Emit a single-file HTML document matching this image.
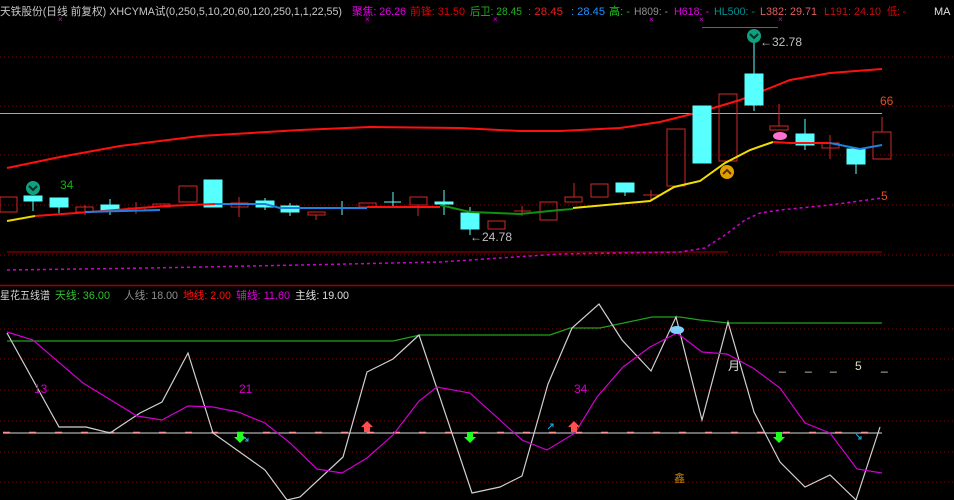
<!DOCTYPE html>
<html><head><meta charset="utf-8"><style>
html,body{margin:0;padding:0;background:#000;width:954px;height:500px;overflow:hidden}
svg{display:block}
text{font-family:"Liberation Sans","Noto Sans CJK SC",sans-serif;font-size:11px}
</style></head><body>
<svg width="954" height="500" viewBox="0 0 954 500">
<rect width="954" height="500" fill="#000"/>
<!-- header -->
<text x="0" y="15" fill="#c8c8c8" textLength="342" lengthAdjust="spacingAndGlyphs">天铁股份(日线 前复权) XHCYMA试(0,250,5,10,20,60,120,250,1,1,22,55)</text>
<text x="352" y="15" fill="#e000e0" textLength="54" lengthAdjust="spacingAndGlyphs">聚焦: 26.26</text>
<text x="410" y="15" fill="#e00000" textLength="55" lengthAdjust="spacingAndGlyphs">前锋: 31.50</text>
<text x="470" y="15" fill="#20b020" textLength="52" lengthAdjust="spacingAndGlyphs">后卫: 28.45</text>
<text x="528" y="15" fill="#e02020" textLength="35" lengthAdjust="spacingAndGlyphs">: 28.45</text>
<text x="571" y="15" fill="#2090ff" textLength="34" lengthAdjust="spacingAndGlyphs">: 28.45</text>
<text x="609" y="15" fill="#20c020" textLength="21" lengthAdjust="spacingAndGlyphs">高: -</text>
<text x="634" y="15" fill="#909090" textLength="34" lengthAdjust="spacingAndGlyphs">H809: -</text>
<text x="674" y="15" fill="#e000e0" textLength="35" lengthAdjust="spacingAndGlyphs">H618: -</text>
<text x="714" y="15" fill="#009090" textLength="41" lengthAdjust="spacingAndGlyphs">HL500: -</text>
<text x="760" y="15" fill="#e06060" textLength="57" lengthAdjust="spacingAndGlyphs">L382: 29.71</text>
<text x="824" y="15" fill="#c01010" textLength="57" lengthAdjust="spacingAndGlyphs">L191: 24.10</text>
<text x="887" y="15" fill="#e00000" textLength="19" lengthAdjust="spacingAndGlyphs">低: -</text>
<text x="934" y="15" fill="#e0e0e0">MA</text>
<g fill="#e000e0"><text x="58" y="22" style="font-size:8px">×</text><text x="365" y="22" style="font-size:8px">×</text><text x="493" y="22" style="font-size:8px">×</text><text x="649" y="22" style="font-size:8px">×</text><text x="699" y="22" style="font-size:8px">×</text><text x="778" y="22" style="font-size:8px">×</text></g>
<!-- upper grid -->
<g stroke="#8a0000" stroke-dasharray="1,3" stroke-width="1">
<line x1="0" y1="57" x2="954" y2="57"/><line x1="0" y1="106" x2="954" y2="106"/><line x1="0" y1="155" x2="954" y2="155"/><line x1="0" y1="205" x2="954" y2="205"/><line x1="0" y1="255" x2="954" y2="255"/>
</g>
<line x1="7" y1="252" x2="728" y2="252" stroke="#a00000"/>
<line x1="779" y1="252" x2="882" y2="252" stroke="#a00000"/>
<line x1="0" y1="113.5" x2="882" y2="113.5" stroke="#e09090"/>
<line x1="702" y1="27.5" x2="778" y2="27.5" stroke="#009090"/>
<line x1="0" y1="285.5" x2="954" y2="285.5" stroke="#a00000" stroke-width="1.5"/>
<polyline fill="none" stroke="#d000d0" stroke-width="1.5" stroke-dasharray="3,3" points="7,270 150,268 300,265 440,262 560,254 680,252 705,248 725,235 745,220 760,213 780,210 830,205 882,198"/>
<polyline fill="none" stroke="#ff1010" stroke-width="2" points="7,168 60,157 120,146 200,136 300,130 370,127 460,128 520,131 560,131 620,128 660,122 700,112 740,100 790,80 830,73 882,69"/>
<g stroke="#d02828" fill="none" stroke-width="1">
<rect x="0" y="197" width="17" height="15"/>
<line x1="85" y1="205" x2="85" y2="215"/><rect x="76" y="207" width="17" height="5"/>
<rect x="128" y="208" width="17" height="3"/><line x1="136" y1="202" x2="136" y2="214"/>
<rect x="153" y="204" width="17" height="3"/>
<rect x="179" y="186" width="18" height="16"/>
<rect x="231" y="203" width="17" height="4"/><line x1="239" y1="197" x2="239" y2="217"/>
<rect x="308" y="212" width="17" height="3"/><line x1="316" y1="215" x2="316" y2="220"/>
<rect x="359" y="203" width="17" height="4"/>
<rect x="410" y="197" width="17" height="8"/><line x1="418" y1="205" x2="418" y2="216"/>
<rect x="488" y="221" width="17" height="8"/>
<line x1="514" y1="211" x2="531" y2="211"/><line x1="522" y1="206" x2="522" y2="216"/>
<rect x="540" y="202" width="17" height="18"/>
<rect x="565" y="197" width="17" height="5"/><line x1="574" y1="183" x2="574" y2="197"/>
<rect x="591" y="184" width="17" height="13"/>
<line x1="643" y1="195" x2="660" y2="195"/><line x1="651" y1="190" x2="651" y2="200"/>
<rect x="667" y="129" width="18" height="57"/>
<rect x="719" y="94" width="18" height="67"/>
<rect x="770" y="126" width="18" height="4"/><line x1="779" y1="104" x2="779" y2="126"/>
<rect x="822" y="143" width="17" height="5"/><line x1="830" y1="135" x2="830" y2="159"/>
<rect x="873" y="132" width="18" height="27"/><line x1="882" y1="117" x2="882" y2="132"/>
</g>
<g fill="#58ffff" stroke="#58ffff">
<rect x="24" y="196" width="18" height="5"/><line x1="33" y1="201" x2="33" y2="211"/>
<rect x="50" y="198" width="18" height="9"/><line x1="59" y1="207" x2="59" y2="213"/>
<rect x="101" y="205" width="18" height="5"/><line x1="110" y1="199" x2="110" y2="215"/>
<rect x="204" y="180" width="18" height="27"/>
<rect x="256" y="201" width="18" height="6"/><line x1="265" y1="198" x2="265" y2="210"/>
<rect x="281" y="206" width="18" height="6"/><line x1="290" y1="203" x2="290" y2="216"/>
<line x1="333" y1="208" x2="350" y2="208"/><line x1="342" y1="201" x2="342" y2="215"/>
<line x1="384" y1="202" x2="401" y2="202"/><line x1="393" y1="192" x2="393" y2="208"/>
<rect x="435" y="202" width="18" height="2"/><line x1="444" y1="190" x2="444" y2="215"/>
<rect x="461" y="213" width="18" height="16"/><line x1="470" y1="207" x2="470" y2="235"/>
<rect x="616" y="183" width="18" height="9"/><line x1="625" y1="192" x2="625" y2="196"/>
<rect x="693" y="106" width="18" height="57"/>
<rect x="745" y="74" width="18" height="31"/><line x1="754" y1="40" x2="754" y2="111"/>
<rect x="796" y="134" width="18" height="11"/><line x1="805" y1="119" x2="805" y2="150"/>
<rect x="847" y="149" width="18" height="15"/><line x1="856" y1="164" x2="856" y2="174"/>
</g>
<polyline fill="none" stroke="#e8d800" stroke-width="2" points="7,221 35,216"/>
<polyline fill="none" stroke="#ff1010" stroke-width="2" points="35,216 90,212 165,206 215,204"/>
<polyline fill="none" stroke="#2080e0" stroke-width="2" points="85,212 160,210"/>
<polyline fill="none" stroke="#2080e0" stroke-width="2" points="215,204 265,204 280,208 367,208"/>
<polyline fill="none" stroke="#ff1010" stroke-width="2" points="367,207 440,207"/>
<polyline fill="none" stroke="#109010" stroke-width="2" points="440,205 470,212 520,214 560,210 573,209"/>
<polyline fill="none" stroke="#f0e000" stroke-width="2" points="573,208 650,201 674,187 700,181 725,163 750,150 773,142"/>
<polyline fill="none" stroke="#ff1010" stroke-width="2" points="773,142 790,143 830,143"/>
<polyline fill="none" stroke="#2080e0" stroke-width="2" points="830,143 860,149 882,145"/>
<circle cx="33" cy="188" r="7" fill="#10a080"/><path d="M29,186 l4,4 l4,-4" stroke="#003020" stroke-width="2" fill="none"/>
<circle cx="754" cy="36" r="7" fill="#10a080"/><path d="M750,34 l4,4 l4,-4" stroke="#003020" stroke-width="2" fill="none"/>
<circle cx="727" cy="172" r="7" fill="#e0a000"/><path d="M723,174 l4,-4 l4,4" stroke="#603000" stroke-width="2" fill="none"/>
<ellipse cx="780" cy="136" rx="7" ry="4" fill="#ff70d0"/>
<text x="60" y="189" fill="#10b010" style="font-size:12px">34</text>
<text x="880" y="105" fill="#e05020" style="font-size:12px">66</text>
<text x="881" y="200" fill="#e05020" style="font-size:12px">5</text>
<text x="760" y="46" fill="#c0c0c0" style="font-size:12px">←32.78</text>
<text x="470" y="241" fill="#c0c0c0" style="font-size:12px">←24.78</text>
<!-- lower panel -->
<text x="0" y="299" fill="#d0d0d0" textLength="50" lengthAdjust="spacingAndGlyphs">星花五线谱</text>
<text x="55" y="299" fill="#30c030" textLength="55" lengthAdjust="spacingAndGlyphs">天线: 36.00</text>
<text x="124" y="299" fill="#909090" textLength="54" lengthAdjust="spacingAndGlyphs">人线: 18.00</text>
<text x="183" y="299" fill="#ff1010" textLength="48" lengthAdjust="spacingAndGlyphs">地线: 2.00</text>
<text x="236" y="299" fill="#e000e0" textLength="54" lengthAdjust="spacingAndGlyphs">辅线: 11.60</text>
<text x="295" y="299" fill="#e0e0e0" textLength="54" lengthAdjust="spacingAndGlyphs">主线: 19.00</text>
<g stroke="#8a0000" stroke-dasharray="1,3">
<line x1="0" y1="329" x2="954" y2="329"/><line x1="0" y1="359" x2="954" y2="359"/><line x1="0" y1="390" x2="954" y2="390"/><line x1="0" y1="421" x2="954" y2="421"/><line x1="0" y1="452" x2="954" y2="452"/><line x1="0" y1="482" x2="954" y2="482"/>
</g>
<line x1="3" y1="433" x2="882" y2="433" stroke="#909090" stroke-width="1.5"/>
<line x1="3" y1="432.5" x2="882" y2="432.5" stroke="#ff9090" stroke-width="1.5" stroke-dasharray="7,19"/>
<polyline fill="none" stroke="#20a020" stroke-width="1.2" points="7,341 393,341 420,335 470,335 550,335 570,328 600,328 652,317 680,317 700,320 728,323 882,323"/>
<polyline fill="none" stroke="#d0d0d0" stroke-width="1.2" points="7,333 59,427 86,427 110,433 140,413 162,402 188,353 213,433 265,470 287,500 300,497 343,457 367,372 393,359 419,335 472,493 500,487 522,476 548,384 572,328 599,304 622,340 651,371 676,317 702,420 728,322 754,412 780,462 805,487 830,475 856,500 880,427"/>
<polyline fill="none" stroke="#d000d0" stroke-width="1.2" points="7,332 33,340 83,383 137,416 162,420 188,406 213,407 238,412 265,423 290,443 317,469 342,473 367,458 393,435 419,401 437,387 470,393 522,440 547,450 575,433 597,397 623,367 650,347 677,333 702,352 727,354 753,368 780,388 805,423 830,433 857,469 882,473"/>
<text x="34" y="393" fill="#d000d0" style="font-size:12px">13</text>
<text x="239" y="393" fill="#d000d0" style="font-size:12px">21</text>
<text x="574" y="393" fill="#d000d0" style="font-size:12px">34</text>
<text x="728" y="370" fill="#e0e0e0" style="font-size:12px">月</text>
<text x="779" y="370" fill="#e0e0c0" style="font-size:12px">_</text><text x="805" y="370" fill="#e0e0c0" style="font-size:12px">_</text><text x="830" y="370" fill="#e0e0c0" style="font-size:12px">_</text><text x="855" y="370" fill="#e0e0c0" style="font-size:12px">5</text><text x="881" y="370" fill="#e0e0c0" style="font-size:12px">_</text>
<g fill="#20ff20">
<path d="M237,432 h6 v5 h3 l-6,6 l-6,-6 h3z"/>
<path d="M467,432 h6 v5 h3 l-6,6 l-6,-6 h3z"/>
<path d="M776,432 h6 v5 h3 l-6,6 l-6,-6 h3z"/>
</g>
<g fill="#ff5050">
<path d="M364,432 h6 v-5 h3 l-6,-6 l-6,6 h3z"/>
<path d="M571,432 h6 v-5 h3 l-6,-6 l-6,6 h3z"/>
</g>
<g stroke="#20b0e0" stroke-width="1" fill="none">
<path d="M243,436 l5,5 m0,-3 v3 h-3"/>
<path d="M548,429 l5,-5 m-3,0 h3 v3"/>
<path d="M856,434 l5,5 m0,-3 v3 h-3"/>
</g>
<ellipse cx="677" cy="330" rx="7" ry="4" fill="#80d0ff"/>
<text x="674" y="482" fill="#c08000">鑫</text>
</svg>
</body></html>
